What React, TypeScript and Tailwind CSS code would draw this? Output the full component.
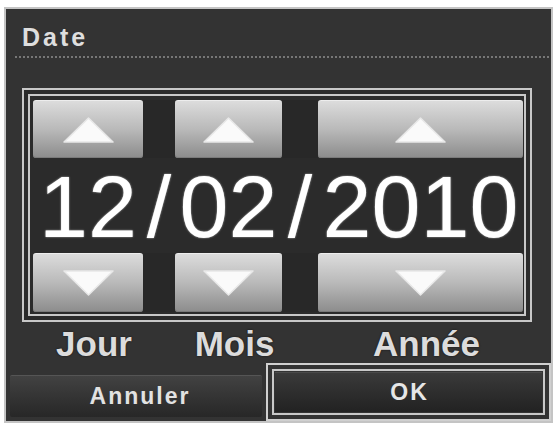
import React from "react";

const font = { fontFamily: '"Liberation Sans", Arial, sans-serif' };
const cols = "grid grid-cols-[110px_32px_107px_36px_205px]";

function Arrow({ down }: { down?: boolean }) {
    return (
        <svg width="53" height="26" viewBox="0 0 53 26">
            <polygon
                points={down ? "2,1 51,1 26.5,25" : "26.5,1 51,25 2,25"}
                fill="#fafafa"
                stroke="#e8e8e8"
                strokeWidth="1.5"
                strokeLinejoin="round"
            />
        </svg>
    );
}

function SpinButton({ down }: { down?: boolean }) {
    return (
        <div className="flex h-full items-center justify-center rounded-[3px] border-t border-[#ededed] bg-linear-to-b from-[#dcdcdc] via-[#b9b9b9] to-[#8c8c8c] shadow-[inset_0_-1px_0_#7a7a7a]">
            <Arrow down={down} />
        </div>
    );
}

function Gap() {
    return <div className="bg-[#282828]" />;
}

function Digits({ text }: { text: string }) {
    return (
        <div className="flex justify-center whitespace-nowrap pt-[2px] text-[88px] leading-[93px] text-white [text-shadow:0_0_2px_#bbb]">
            {text}
        </div>
    );
}

export default function App() {
    return (
        <div className="h-[427px] w-[555px] bg-white pl-[4px] pt-[7px]" style={font}>
            <div className="flex h-[416px] w-[549px] flex-col border-2 border-[#c4c4c4] bg-[#333333]">
                {/* title */}
                <div className="pl-[16px] pt-[13px] text-[25px] font-bold leading-[30px] tracking-[3px] text-[#dedede]">
                    Date
                </div>
                <div className="ml-[9px] mr-[2px] mt-[4px] border-b-2 border-dotted border-[#777777]" />

                {/* spinner frame */}
                <div className="ml-[16px] mt-[30px] h-[234px] w-[510px] border-2 border-[#c8c8c8] bg-[#2b2b2b] p-[4px]">
                    <div className="h-full border-2 border-[#c8c8c8] pb-[2px] pl-[3px] pr-[1px] pt-[4px]">
                        <div className={`${cols} grid-rows-[58px_95px_59px]`}>
                            <SpinButton />
                            <Gap />
                            <SpinButton />
                            <Gap />
                            <SpinButton />

                            <Digits text="12" />
                            <Digits text="/" />
                            <Digits text="02" />
                            <Digits text="/" />
                            <Digits text="2010" />

                            <SpinButton down />
                            <Gap />
                            <SpinButton down />
                            <Gap />
                            <SpinButton down />
                        </div>
                    </div>
                </div>

                {/* labels */}
                <div className={`${cols} ml-[33px] h-[41px] pt-[2px] text-[35px] font-bold leading-[40px] text-[#dcdcdc] [text-shadow:0_0_2px_#111]`}>
                    <div className="text-center">Jour</div>
                    <div />
                    <div className="text-center">Mois</div>
                    <div />
                    <div className="text-center">Année</div>
                </div>

                {/* actions */}
                <div className="flex flex-1 gap-[4px] pl-[4px]">
                    <button className="mt-[12px] flex h-[42px] w-[252px] items-center justify-center rounded-[2px] border-t border-[#555] bg-linear-to-b from-[#424242] to-[#272727] pl-[8px] text-[23px] font-bold tracking-[2px] text-[#e2e2e2]">
                        Annuler
                    </button>
                    <div className="flex-1 border-2 border-[#d0d0d0] p-[4px]">
                        <div className="h-full border-2 border-[#c8c8c8] p-[1px]">
                            <button className="flex h-full w-full items-center justify-center border-t border-[#4a4a4a] bg-linear-to-b from-[#3a3a3a] to-[#222222] pl-[2px] text-[23px] font-bold tracking-[2px] text-[#e6e6e6]">
                                OK
                            </button>
                        </div>
                    </div>
                </div>
            </div>
        </div>
    );
}
